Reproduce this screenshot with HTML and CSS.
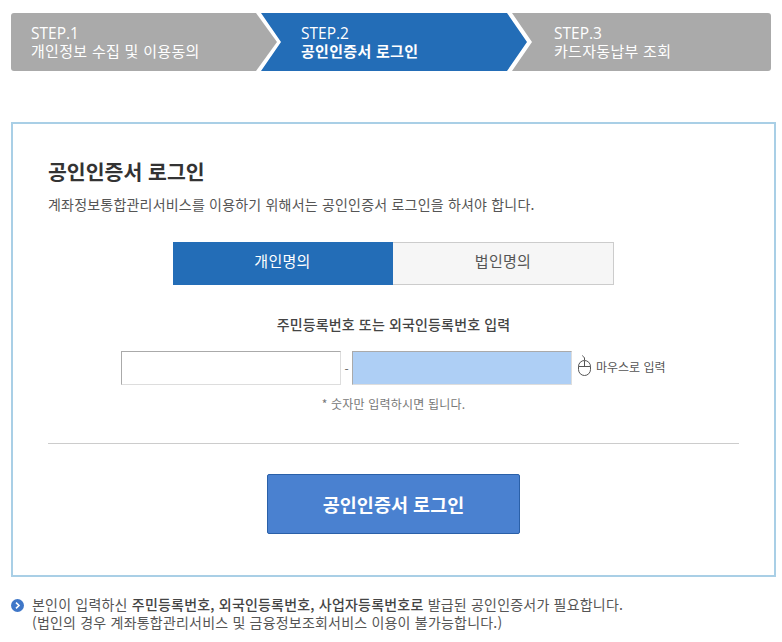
FILE: index.html
```html
<!DOCTYPE html>
<html lang="ko">
<head>
  <meta charset="UTF-8">
  <title>공인인증서 로그인</title>
  <link rel="stylesheet" href="styles.css">
</head>
<body>
  <ol class="steps">
    <li class="step step-first"><span>STEP.1</span>개인정보 수집 및 이용동의</li>
    <li class="step step-mid on"><span>STEP.2</span>공인인증서 로그인</li>
    <li class="step step-last"><span>STEP.3</span>카드자동납부 조회</li>
  </ol>

  <div class="card">
    <h2>공인인증서 로그인</h2>
    <p class="desc">계좌정보통합관리서비스를 이용하기 위해서는 공인인증서 로그인을 하셔야 합니다.</p>

    <div class="tabs">
      <a class="tab on">개인명의</a>
      <a class="tab">법인명의</a>
    </div>

    <p class="input-title">주민등록번호 또는 외국인등록번호 입력</p>
    <div class="input-row">
      <input type="text" class="num">
      <span class="dash">-</span>
      <input type="text" class="num num-focus">
      <span class="mouse">
        <svg width="13" height="24" viewBox="0 0 13 24" fill="none" stroke="#555" stroke-width="1">
          <path d="M6.5 6V4C6.5 2.8 4.5 2.8 4.5 1.5"/>
          <rect x="0.5" y="6.5" width="12" height="15" rx="6"/>
          <path d="M0.5 12.5H12.5M6.5 6.5V12.5"/>
        </svg>
        마우스로 입력
      </span>
    </div>
    <p class="hint">* 숫자만 입력하시면 됩니다.</p>

    <hr>
    <div class="btn-wrap"><button type="button" class="btn-login">공인인증서 로그인</button></div>
  </div>

  <div class="note">
    <svg class="note-icon" width="13" height="13" viewBox="0 0 13 13">
      <circle cx="6.5" cy="6.5" r="6.5" fill="#3f77c8"/>
      <path d="M5 3.6L8 6.5L5 9.4" fill="none" stroke="#fff" stroke-width="1.6"/>
    </svg>
    <p>본인이 입력하신 <b>주민등록번호, 외국인등록번호, 사업자등록번호로</b> 발급된 공인인증서가 필요합니다.<br>(법인의 경우 계좌통합관리서비스 및 금융정보조회서비스 이용이 불가능합니다.)</p>
  </div>
</body>
</html>
```

FILE: styles.css
```css
html, body {
  margin: 0; padding: 0;
  background: #fff; color: #444;
  font-family: "Noto Sans CJK KR", "Open Sans", sans-serif;
  overflow: hidden;
}
body { padding: 13px 6px 0 11px; width: 782px; box-sizing: border-box; height: 642px; }

/* 단계 표시 */
.steps { display: flex; margin: 0; padding: 0; list-style: none; width: 760px; height: 58px; }
.step {
  height: 58px; box-sizing: border-box; padding-top: 11px;
  background: #aaa; color: #fff;
  font-size: 15px; line-height: 18px; letter-spacing: 0.3px;
}
.step span { display: block; font-family: "Open Sans", sans-serif; font-size: 15.5px; letter-spacing: 0; }
.step-first {
  width: 266px; padding-left: 20px; border-radius: 3px 0 0 3px;
  clip-path: polygon(0 0, 245px 0, 266px 29px, 245px 58px, 0 58px);
}
.step-mid {
  width: 266px; margin-left: -16px; padding-left: 40px;
  clip-path: polygon(0 0, 246px 0, 266px 29px, 246px 58px, 0 58px, 20px 29px);
}
.step-mid.on { background: #236db7; font-weight: 700; }
.step-mid.on span { font-weight: 400; }
.step-last {
  width: 259px; margin-left: -15px; padding-left: 42px; border-radius: 0 3px 3px 0;
  clip-path: polygon(0 0, 259px 0, 259px 58px, 0 58px, 20px 29px);
}

.card {
  margin-top: 51px; height: 455px; box-sizing: border-box;
  border: 2px solid #a9cfe6;
  padding: 0 35px;
}
.card h2 { margin: 33px 0 0; font-size: 20.5px; line-height: 28px; font-weight: 700; color: #333; }
.desc { margin: 9px 0 0; font-size: 14px; line-height: 20px; letter-spacing: 0.2px; color: #555; }

.tabs { display: flex; width: 441px; height: 43px; margin: 28px auto 0; }
.tab {
  flex: 1; box-sizing: border-box; text-align: center;
  font-size: 15px; line-height: 36px; letter-spacing: 0.3px; color: #555;
  background: #f6f6f6; border: 1px solid #ccc; border-left: 0;
}
.tab.on { flex: none; width: 220px; background: #236db7; border-color: #236db7; color: #fff; }

.input-title { margin: 29px 0 0; text-align: center; font-size: 14px; line-height: 20px; letter-spacing: 0.15px; font-weight: 500; color: #444; }
.input-row { display: flex; align-items: center; margin: 17px 0 0 73px; height: 34px; }
.num {
  width: 220px; height: 34px; box-sizing: border-box; margin: 0; padding: 0;
  border: 1px solid; border-color: #aaa #ddd #ddd #aaa; background: #fff;
}
.num-focus { background: #aecff5; }
.dash { width: 11px; text-align: center; font-size: 12px; color: #666; }
.mouse { display: flex; align-items: center; gap: 5px; margin: 0 0 4px 6px; font-size: 12px; color: #555; }
.hint { margin: 9px 0 0; text-align: center; font-size: 12px; line-height: 20px; letter-spacing: 0.2px; color: #777; }

.card hr { margin: 29px 0 0; border: 0; border-top: 1px solid #ccc; }
.btn-wrap { display: flex; justify-content: center; margin-top: 30px; }
.btn-login {
  width: 253px; height: 60px; margin: 0; padding: 0;
  background: #4a81d0; color: #fff;
  border: 1px solid #2a60a8; border-radius: 2px;
  font: 700 18.5px "Noto Sans CJK KR", sans-serif;
}

.note { display: flex; gap: 8px; margin-top: 18px; }
.note-icon { margin-top: 4px; flex: none; }
.note p { margin: 0; font-size: 14px; line-height: 18px; letter-spacing: 0.2px; color: #555; }
.note b { font-weight: 500; color: #444; }
```
